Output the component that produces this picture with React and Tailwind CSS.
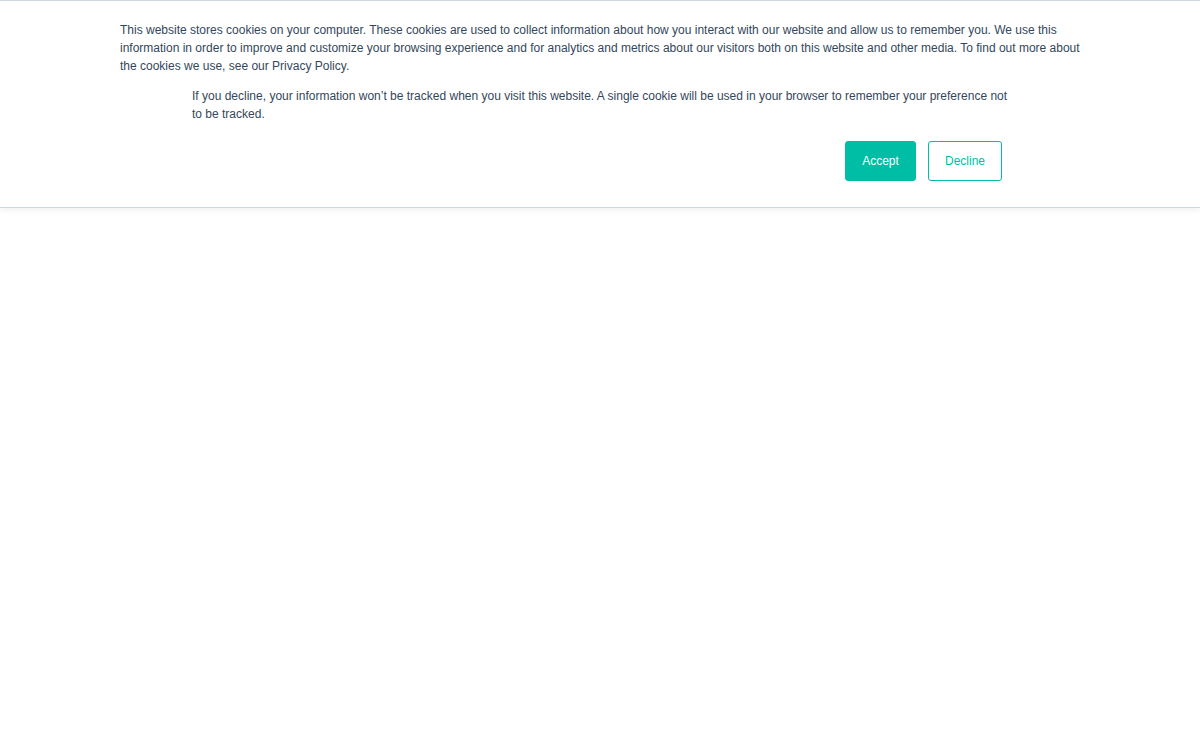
import React from 'react'

function CookieBanner() {
  return (
    <div className="w-full bg-white border-t border-b border-[#cbd6e2] shadow-[0_2px_6px_rgba(45,62,80,0.08)] pt-5 pb-[26px]">
      <div className="max-w-[960px] mx-auto text-[12px] leading-[18px] text-[#33475b] font-['Liberation_Sans',Arial,sans-serif]">
        <p>
          This website stores cookies on your computer. These cookies are used to collect information about how you interact with our website and allow us to remember you. We use this information in order to improve and customize your browsing experience and for analytics and metrics about our visitors both on this website and other media. To find out more about the cookies we use, see our Privacy Policy.
        </p>
        <div className="mx-[72px] mt-3">
          <p>
            If you decline, your information won’t be tracked when you visit this website. A single cookie will be used in your browser to remember your preference not to be tracked.
          </p>
          <div className="flex justify-end gap-3 mt-[18px] mr-[6px]">
            <button className="h-10 w-[71px] rounded-[3px] bg-[#00bda5] border border-[#00bda5] text-white text-[12px]">
              Accept
            </button>
            <button className="h-10 w-[74px] rounded-[3px] bg-white border border-[#00bda5] text-[#00bda5] text-[12px]">
              Decline
            </button>
          </div>
        </div>
      </div>
    </div>
  )
}

export default function App() {
  return (
    <div className="w-full h-[750px] bg-white">
      <CookieBanner />
    </div>
  )
}
